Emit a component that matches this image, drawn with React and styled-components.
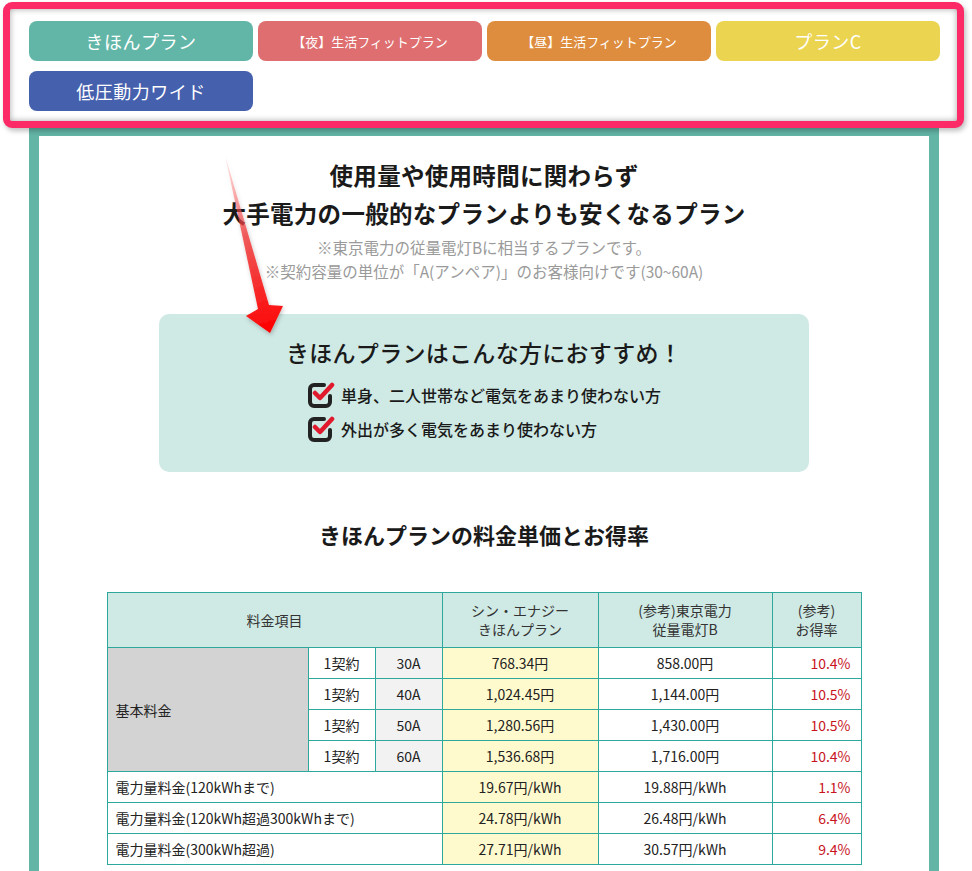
import React from 'react';
import styled, { createGlobalStyle } from 'styled-components';

const GlobalStyle = createGlobalStyle`
  html, body {
    margin: 0;
    padding: 0;
    background: #fff;
    font-family: 'Noto Sans CJK JP', 'Noto Sans', sans-serif;
    color: #222;
  }
`;

const Page = styled.div`
  position: relative;
  width: 972px;
  height: 871px;
  overflow: hidden;
  padding-top: 2px;
  box-sizing: border-box;
`;

const NavFrame = styled.div`
  position: relative;
  z-index: 2;
  margin-left: 3px;
  width: 961px;
  box-sizing: border-box;
  border: 7px solid #fc2b68;
  border-radius: 9px;
  background: #fff;
  box-shadow: inset 0 0 6px rgba(0, 0, 0, 0.35), 2px 3px 5px rgba(0, 0, 0, 0.25);
  padding: 12px 18px 10px 19px;
`;

const PlanGrid = styled.div`
  display: grid;
  grid-template-columns: repeat(4, 224px);
  column-gap: 5px;
  row-gap: 10px;
`;

const PlanButton = styled.div`
  height: 40px;
  border-radius: 8px;
  background: ${p => p.$bg};
  color: #fff;
  display: flex;
  align-items: center;
  justify-content: center;
  font-size: ${p => p.$size || 18}px;
  letter-spacing: ${p => (p.$size ? '0' : '0.5px')};
`;

const Panel = styled.div`
  margin: -2px 0 0 29px;
  width: 910px;
  box-sizing: border-box;
  border: 10px solid #63b5a6;
  border-bottom: none;
  background: #fff;
  padding: 20px 0 40px;
  text-align: center;
`;

const Lead = styled.h2`
  margin: 0;
  font-size: 23.5px;
  line-height: 38px;
  font-weight: 700;
  color: #1a1a1a;
  letter-spacing: 0.3px;
`;

const Note = styled.p`
  margin: 3px 0 0;
  font-size: 15.5px;
  line-height: 24px;
  color: #9a9a9a;
`;

const RecommendBox = styled.div`
  margin: 31px auto 0;
  width: 650px;
  height: 158px;
  box-sizing: border-box;
  background: #cfe9e4;
  border-radius: 10px;
  padding: 22px 0 0;
`;

const RecommendTitle = styled.h3`
  margin: 0 0 10px;
  font-size: 23px;
  line-height: 32px;
  font-weight: 500;
  color: #1a1a1a;
  letter-spacing: 0.3px;
`;

const CheckList = styled.ul`
  display: inline-block;
  margin: 0;
  padding: 0;
  list-style: none;
  text-align: left;
`;

const CheckItem = styled.li`
  display: flex;
  align-items: center;
  gap: 6px;
  height: 34px;
  font-size: 16px;
  color: #1a1a1a;
  font-weight: 500;
`;

const SectionTitle = styled.h3`
  margin: 46px 0 0;
  font-size: 22px;
  line-height: 32px;
  font-weight: 700;
  color: #1a1a1a;
`;

const Table = styled.table`
  margin: 42px auto 0;
  width: 754px;
  border-collapse: collapse;
  table-layout: fixed;
  font-size: 14px;
  color: #222;
`;

const Th = styled.th`
  height: 54px;
  background: #cfe9e4;
  border: 1px solid #2ea89a;
  font-weight: 400;
  line-height: 19px;
  color: #333;
  padding: 0;
`;

const Td = styled.td`
  height: 30px;
  border: 1px solid #2ea89a;
  padding: 0 ${p => (p.$align === 'right' ? '10px' : p.$align === 'left' ? '8px' : '0')};
  text-align: ${p => p.$align || 'center'};
  background: ${p => p.$bg || '#fff'};
  color: ${p => p.$color || '#222'};
`;

const Overlay = styled.svg`
  position: absolute;
  left: 0;
  top: 0;
  z-index: 3;
  pointer-events: none;
`;

const CheckIcon = () => (
  <svg width="28" height="28" viewBox="0 0 28 28">
    <path d="M17 4 H7 a4 4 0 0 0 -4 4 V21 a4 4 0 0 0 4 4 H19 a4 4 0 0 0 4 -4 V15" fill="none" stroke="#222" strokeWidth="4" strokeLinecap="round" />
    <path d="M8 12 L13 17 L25 4" fill="none" stroke="#e0192d" strokeWidth="4.5" strokeLinejoin="round" strokeLinecap="round" />
  </svg>
);

const plans = [
  { label: 'きほんプラン', bg: '#62b6a7' },
  { label: '【夜】生活フィットプラン', bg: '#de6e6f', size: 13 },
  { label: '【昼】生活フィットプラン', bg: '#de8d3e', size: 13 },
  { label: 'プランC', bg: '#ebd450' },
  { label: '低圧動力ワイド', bg: '#4560ad' },
];

const basic = [
  ['30A', '768.34円', '858.00円', '10.4%'],
  ['40A', '1,024.45円', '1,144.00円', '10.5%'],
  ['50A', '1,280.56円', '1,430.00円', '10.5%'],
  ['60A', '1,536.68円', '1,716.00円', '10.4%'],
];

const usage = [
  ['電力量料金(120kWhまで)', '19.67円/kWh', '19.88円/kWh', '1.1%'],
  ['電力量料金(120kWh超過300kWhまで)', '24.78円/kWh', '26.48円/kWh', '6.4%'],
  ['電力量料金(300kWh超過)', '27.71円/kWh', '30.57円/kWh', '9.4%'],
];

export default function App() {
  return (
    <Page>
      <GlobalStyle />
      <NavFrame>
        <PlanGrid>
          {plans.map(p => (
            <PlanButton key={p.label} $bg={p.bg} $size={p.size}>{p.label}</PlanButton>
          ))}
        </PlanGrid>
      </NavFrame>

      <Panel>
        <Lead>使用量や使用時間に関わらず<br />大手電力の一般的なプランよりも安くなるプラン</Lead>
        <Note>※東京電力の従量電灯Bに相当するプランです。<br />※契約容量の単位が「A(アンペア)」のお客様向けです(30~60A)</Note>

        <RecommendBox>
          <RecommendTitle>きほんプランはこんな方におすすめ！</RecommendTitle>
          <CheckList>
            <CheckItem><CheckIcon />単身、二人世帯など電気をあまり使わない方</CheckItem>
            <CheckItem><CheckIcon />外出が多く電気をあまり使わない方</CheckItem>
          </CheckList>
        </RecommendBox>

        <SectionTitle>きほんプランの料金単価とお得率</SectionTitle>

        <Table>
          <colgroup>
            <col style={{ width: 201 }} />
            <col style={{ width: 67 }} />
            <col style={{ width: 67 }} />
            <col style={{ width: 156 }} />
            <col style={{ width: 174 }} />
            <col style={{ width: 89 }} />
          </colgroup>
          <thead>
            <tr>
              <Th colSpan={3}>料金項目</Th>
              <Th>シン・エナジー<br />きほんプラン</Th>
              <Th>(参考)東京電力<br />従量電灯B</Th>
              <Th>(参考)<br />お得率</Th>
            </tr>
          </thead>
          <tbody>
            {basic.map((r, i) => (
              <tr key={r[0]}>
                {i === 0 && <Td rowSpan={4} $align="left" $bg="#d3d3d3">基本料金</Td>}
                <Td>1契約</Td>
                <Td $bg="#f2f2f2">{r[0]}</Td>
                <Td $bg="#fffacd">{r[1]}</Td>
                <Td>{r[2]}</Td>
                <Td $align="right" $color="#c8141e">{r[3]}</Td>
              </tr>
            ))}
            {usage.map(r => (
              <tr key={r[0]}>
                <Td colSpan={3} $align="left">{r[0]}</Td>
                <Td $bg="#fffacd">{r[1]}</Td>
                <Td>{r[2]}</Td>
                <Td $align="right" $color="#c8141e">{r[3]}</Td>
              </tr>
            ))}
          </tbody>
        </Table>
      </Panel>

      <Overlay width="972" height="871" viewBox="0 0 972 871">
        <defs>
          <linearGradient id="arrowFill" x1="225" y1="155" x2="270" y2="333" gradientUnits="userSpaceOnUse">
            <stop offset="0" stopColor="#ff6f6f" stopOpacity="0.15" />
            <stop offset="0.45" stopColor="#f03a3a" stopOpacity="0.8" />
            <stop offset="1" stopColor="#ff0000" />
          </linearGradient>
          <filter id="arrowShadow" x="-50%" y="-20%" width="200%" height="140%">
            <feDropShadow dx="1" dy="2" stdDeviation="2" floodColor="#000" floodOpacity="0.25" />
          </filter>
        </defs>
        <polygon
          points="225,155 269,305 283,306 270,333 246,316 258,309"
          fill="url(#arrowFill)"
          filter="url(#arrowShadow)"
        />
      </Overlay>
    </Page>
  );
}
